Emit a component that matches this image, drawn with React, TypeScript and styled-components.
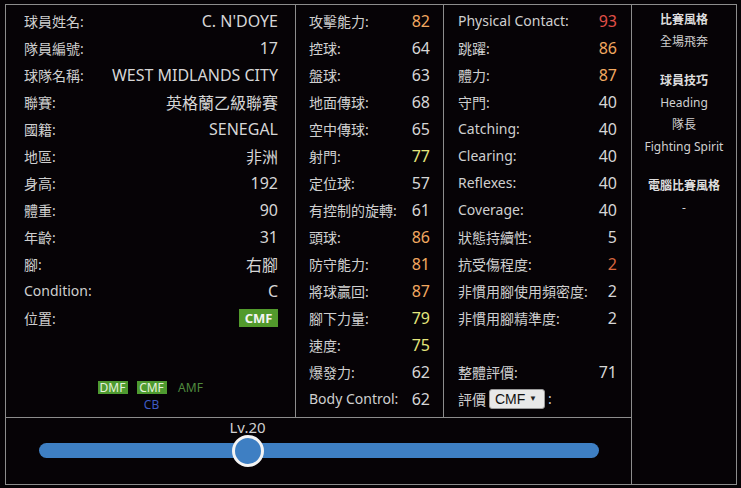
import React from "react";
import styled, { createGlobalStyle } from "styled-components";

const Global = createGlobalStyle`
  html, body { margin: 0; padding: 0; background: #060306; }
  body {
    font-family: "Noto Sans", "Noto Sans CJK TC", sans-serif;
    color: #d2d2d2;
    height: 488px;
    overflow: hidden;
  }
`;

type Tone = "plain" | "yellow" | "orange" | "red" | "low";

const toneColor: Record<Tone, string> = {
  plain: "#d6d6d6",
  yellow: "#e4e67c",
  orange: "#f2a860",
  red: "#e05048",
  low: "#d8663e",
};

const Board = styled.div`
  display: grid;
  grid-template-columns: 289px 147px 187px 104px;
  grid-template-rows: 412px 66px;
  gap: 1px;
  padding: 1px;
  background: #8c8c8c;
  width: max-content;
  margin: 4px 0 0 5px;
`;

const Cell = styled.div<{ $padL: number; $padR: number }>`
  background: #060306;
  padding: 2px ${(p) => p.$padR}px 0 ${(p) => p.$padL}px;
  display: flex;
  flex-direction: column;
  box-sizing: border-box;
`;

const Row = styled.div`
  display: flex;
  justify-content: space-between;
  align-items: center;
  height: 27px;
  white-space: nowrap;
`;

const Label = styled.span`
  font-size: 14px;
  color: #cfcfcf;
`;

const Value = styled.span<{ $tone?: Tone }>`
  font-size: 16px;
  color: ${(p) => toneColor[p.$tone ?? "plain"]};
`;

const Badge = styled.span`
  display: inline-flex;
  align-items: center;
  justify-content: center;
  width: 39px;
  height: 18px;
  background: #529a2c;
  color: #f4f4f4;
  font-size: 13px;
  font-weight: 700;
`;

const PosMap = styled.div`
  margin-top: auto;
  margin-bottom: 6px;
  align-self: center;
  display: grid;
  grid-template-columns: repeat(3, 30px);
  grid-auto-rows: 13px;
  column-gap: 9px;
  row-gap: 4px;
  margin-left: 1px;
`;

const Pos = styled.span<{ $kind: "main" | "sub" | "alt" }>`
  display: flex;
  align-items: center;
  justify-content: center;
  font-size: 12px;
  line-height: 13px;
  white-space: nowrap;
  background: ${(p) => (p.$kind === "main" ? "#4e9a30" : "transparent")};
  color: ${(p) =>
    p.$kind === "main" ? "#e6f2de" : p.$kind === "sub" ? "#4f8a3e" : "#3f5cc4"};
`;

const Spacer = styled.div`
  height: 27px;
`;

const SelectLabel = styled.span`
  display: inline-flex;
  align-items: center;
  gap: 3px;
  font-size: 14px;
  color: #cfcfcf;
`;

const SelectBox = styled.span`
  display: inline-flex;
  align-items: center;
  justify-content: space-between;
  box-sizing: border-box;
  width: 56px;
  height: 20px;
  padding: 0 7px 0 5px;
  background: #e8e8e8;
  border: 1px solid #9a9a9a;
  border-radius: 3px;
  font-family: "Liberation Sans", Arial, sans-serif;
  font-size: 14px;
  color: #111;
`;

const Arrow = styled.span`
  font-size: 8px;
  color: #222;
`;

const SideCell = styled.div`
  grid-row: 1 / 3;
  grid-column: 4;
  background: #060306;
  padding-top: 4px;
  display: flex;
  flex-direction: column;
  align-items: center;
  font-size: 12px;
  line-height: 22px;
`;

const SideSection = styled.div`
  display: flex;
  flex-direction: column;
  align-items: center;
  margin-bottom: 17px;
`;

const SideHead = styled.div`
  font-weight: 700;
  color: #dedede;
`;

const SideItem = styled.div`
  color: #d0d0d0;
  white-space: nowrap;
`;

const SliderCell = styled.div`
  grid-column: 1 / 4;
  grid-row: 2;
  background: #060306;
  padding: 0 32px 0 33px;
`;

const SliderArea = styled.div`
  position: relative;
  height: 66px;
`;

const Track = styled.div`
  position: absolute;
  left: 0;
  right: 0;
  top: 25px;
  height: 15px;
  border-radius: 8px;
  background: #3e7fc3;
`;

const Thumb = styled.div`
  position: absolute;
  top: 17px;
  width: 32px;
  height: 32px;
  box-sizing: border-box;
  border-radius: 50%;
  border: 3px solid #f4f4f4;
  background: #3e7fc3;
  transform: translateX(-50%);
`;

const LevelTag = styled.div`
  position: absolute;
  top: 0;
  transform: translateX(-50%);
  font-size: 15px;
  line-height: 18px;
  color: #d0d0d0;
`;

type Stat = { label: string; value: React.ReactNode; tone?: Tone };

const profile: Stat[] = [
  { label: "球員姓名:", value: "C. N'DOYE" },
  { label: "隊員編號:", value: "17" },
  { label: "球隊名稱:", value: "WEST MIDLANDS CITY" },
  { label: "聯賽:", value: "英格蘭乙級聯賽" },
  { label: "國籍:", value: "SENEGAL" },
  { label: "地區:", value: "非洲" },
  { label: "身高:", value: "192" },
  { label: "體重:", value: "90" },
  { label: "年齡:", value: "31" },
  { label: "腳:", value: "右腳" },
  { label: "Condition:", value: "C" },
];

const attack: Stat[] = [
  { label: "攻擊能力:", value: "82", tone: "orange" },
  { label: "控球:", value: "64" },
  { label: "盤球:", value: "63" },
  { label: "地面傳球:", value: "68" },
  { label: "空中傳球:", value: "65" },
  { label: "射門:", value: "77", tone: "yellow" },
  { label: "定位球:", value: "57" },
  { label: "有控制的旋轉:", value: "61" },
  { label: "頭球:", value: "86", tone: "orange" },
  { label: "防守能力:", value: "81", tone: "orange" },
  { label: "將球贏回:", value: "87", tone: "orange" },
  { label: "腳下力量:", value: "79", tone: "yellow" },
  { label: "速度:", value: "75", tone: "yellow" },
  { label: "爆發力:", value: "62" },
  { label: "Body Control:", value: "62" },
];

const physical: Stat[] = [
  { label: "Physical Contact:", value: "93", tone: "red" },
  { label: "跳躍:", value: "86", tone: "orange" },
  { label: "體力:", value: "87", tone: "orange" },
  { label: "守門:", value: "40" },
  { label: "Catching:", value: "40" },
  { label: "Clearing:", value: "40" },
  { label: "Reflexes:", value: "40" },
  { label: "Coverage:", value: "40" },
  { label: "狀態持續性:", value: "5" },
  { label: "抗受傷程度:", value: "2", tone: "low" },
  { label: "非慣用腳使用頻密度:", value: "2" },
  { label: "非慣用腳精準度:", value: "2" },
];

const side = [
  { head: "比賽風格", items: ["全場飛奔"] },
  { head: "球員技巧", items: ["Heading", "隊長", "Fighting Spirit"] },
  { head: "電腦比賽風格", items: ["-"] },
];

const level = { value: 20, min: 1, max: 53 };
const trackWidth = 559;
const thumbSize = 32;

function StatRows({ stats }: { stats: Stat[] }) {
  return (
    <>
      {stats.map((s) => (
        <Row key={s.label}>
          <Label>{s.label}</Label>
          <Value $tone={s.tone}>{s.value}</Value>
        </Row>
      ))}
    </>
  );
}

export default function App() {
  const pct = (level.value - level.min) / (level.max - level.min);
  const thumbX = thumbSize / 2 + pct * (trackWidth - thumbSize);
  return (
    <>
      <Global />
      <Board>
        <Cell $padL={18} $padR={17}>
          <StatRows stats={profile} />
          <Row>
            <Label>位置:</Label>
            <Badge>CMF</Badge>
          </Row>
          <PosMap>
            <Pos $kind="main">DMF</Pos>
            <Pos $kind="main">CMF</Pos>
            <Pos $kind="sub">AMF</Pos>
            <span />
            <Pos $kind="alt">CB</Pos>
          </PosMap>
        </Cell>
        <Cell $padL={13} $padR={13}>
          <StatRows stats={attack} />
        </Cell>
        <Cell $padL={14} $padR={14}>
          <StatRows stats={physical} />
          <Spacer />
          <Row>
            <Label>整體評價:</Label>
            <Value>71</Value>
          </Row>
          <Row>
            <SelectLabel>
              評價
              <SelectBox>
                CMF<Arrow>▼</Arrow>
              </SelectBox>
              :
            </SelectLabel>
          </Row>
        </Cell>
        <SideCell>
          {side.map((sec) => (
            <SideSection key={sec.head}>
              <SideHead>{sec.head}</SideHead>
              {sec.items.map((it) => (
                <SideItem key={it}>{it}</SideItem>
              ))}
            </SideSection>
          ))}
        </SideCell>
        <SliderCell>
          <SliderArea>
            <Track />
            <LevelTag style={{ left: thumbX }}>Lv.{level.value}</LevelTag>
            <Thumb style={{ left: thumbX }} />
          </SliderArea>
        </SliderCell>
      </Board>
    </>
  );
}
